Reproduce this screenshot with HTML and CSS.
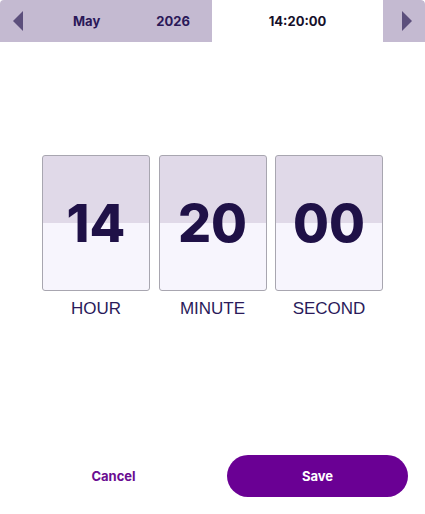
FILE: index.html
```html
<!DOCTYPE html>
<html lang="en">
  <head>
    <meta charset="utf-8">
    <title>Time picker</title>
    <link rel="stylesheet" href="styles.css">
  </head>
  <body>
    <div class="dialog">
      <header class="tabs">
        <div class="tab tab-date">
          <span class="arrow arrow-left"></span>
          <span class="month">May</span>
          <span class="year">2026</span>
        </div>
        <div class="tab tab-time">14:20:00</div>
        <div class="tab tab-next">
          <span class="arrow arrow-right"></span>
        </div>
      </header>

      <main class="clock">
        <div class="unit">
          <div class="card"><span>14</span></div>
          <div class="label">HOUR</div>
        </div>
        <div class="unit">
          <div class="card"><span>20</span></div>
          <div class="label">MINUTE</div>
        </div>
        <div class="unit">
          <div class="card"><span>00</span></div>
          <div class="label">SECOND</div>
        </div>
      </main>

      <footer class="actions">
        <button class="btn btn-cancel">Cancel</button>
        <button class="btn btn-save">Save</button>
      </footer>
    </div>
  </body>
</html>
```

FILE: styles.css
```css
:root {
  font-family: Inter, "Liberation Sans", Arial, sans-serif;
  font-size: 16px;
}

body {
  margin: 0;
  padding: 0;
  background: #fff;
}

.dialog {
  width: 425px;
  height: 514px;
  display: flex;
  flex-direction: column;
  border-radius: 4px;
  overflow: hidden;
  background: #fff;
}

.tabs {
  display: flex;
  height: 42px;
  flex-shrink: 0;
  font-weight: 700;
  font-size: 13px;
  color: #2a1858;
}
.tab {
  display: flex;
  align-items: center;
}
.tab-date {
  width: 212px;
  background: #c4bad1;
}
.tab-time {
  flex: 1;
  justify-content: center;
  background: #fff;
  color: #16102a;
}
.tab-next {
  width: 42px;
  background: #c4bad1;
  border-top-right-radius: 4px;
}

.arrow {
  width: 0;
  height: 0;
  border-top: 10px solid transparent;
  border-bottom: 10px solid transparent;
}
.arrow-left {
  margin-left: 13px;
  border-right: 10px solid #5c4f7c;
}
.arrow-right {
  margin-left: 19px;
  border-left: 10px solid #5c4f7c;
}
.month {
  margin-left: 50px;
}
.year {
  margin-left: 56px;
}

.clock {
  flex: 1;
  display: flex;
  gap: 8.5px;
  padding: 113px 0 0 42px;
}
.unit {
  display: flex;
  flex-direction: column;
  align-items: center;
}
.card {
  width: 106px;
  height: 134px;
  border: 1px solid #a8a6b0;
  border-radius: 3px;
  background: linear-gradient(#e0d9e8 0, #e0d9e8 50%, #f7f5fd 50%, #f7f5fd 100%);
  display: flex;
  align-items: center;
  justify-content: center;
}
.card span {
  font-size: 52px;
  font-weight: 800;
  color: #1f1147;
  margin-top: 1px;
}
.label {
  margin-top: 8px;
  font-size: 17px;
  color: #2a1a5a;
  font-family: "Liberation Sans", Arial, sans-serif;
}

.actions {
  display: flex;
  align-items: center;
  padding: 0 17px 17px 0;
}
.btn {
  border: none;
  font-family: inherit;
  font-weight: 700;
  font-size: 13px;
  cursor: pointer;
}
.btn-cancel {
  background: none;
  color: #6a0d91;
  width: 227px;
  padding: 0;
}
.btn-save {
  flex: 1;
  height: 42px;
  border-radius: 21px;
  background: #6a0094;
  color: #fff;
}
```
